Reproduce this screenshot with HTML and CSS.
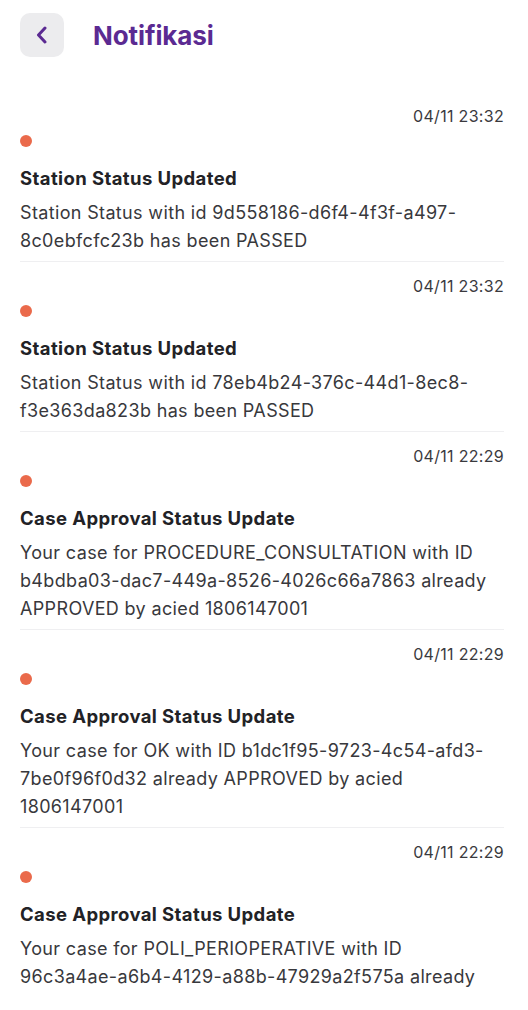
FILE: index.html
```html
<!DOCTYPE html>
<html lang="id">
<head>
<meta charset="utf-8">
<title>Notifikasi</title>
<link rel="stylesheet" href="styles.css">
</head>
<body>
<div class="page">
  <header class="header">
    <button class="back" aria-label="Kembali">
      <svg width="14" height="18" viewBox="0 0 14 18"><path d="M10 2 L3.5 9 L10 16" fill="none" stroke="#5b2a92" stroke-width="3" stroke-linecap="round" stroke-linejoin="round"/></svg>
    </button>
    <h1 class="title">Notifikasi</h1>
  </header>
  <ul class="list">
    <li class="item">
      <div class="time">04/11 23:32</div>
      <span class="dot"></span>
      <div class="item-title">Station Status Updated</div>
      <p class="body">Station Status with id 9d558186-d6f4-4f3f-a497-<br>8c0ebfcfc23b has been PASSED</p>
    </li>
    <li class="item">
      <div class="time">04/11 23:32</div>
      <span class="dot"></span>
      <div class="item-title">Station Status Updated</div>
      <p class="body">Station Status with id 78eb4b24-376c-44d1-8ec8-<br>f3e363da823b has been PASSED</p>
    </li>
    <li class="item">
      <div class="time">04/11 22:29</div>
      <span class="dot"></span>
      <div class="item-title">Case Approval Status Update</div>
      <p class="body">Your case for PROCEDURE_CONSULTATION with ID<br>b4bdba03-dac7-449a-8526-4026c66a7863 already<br>APPROVED by acied 1806147001</p>
    </li>
    <li class="item">
      <div class="time">04/11 22:29</div>
      <span class="dot"></span>
      <div class="item-title">Case Approval Status Update</div>
      <p class="body">Your case for OK with ID b1dc1f95-9723-4c54-afd3-<br>7be0f96f0d32 already APPROVED by acied<br>1806147001</p>
    </li>
    <li class="item">
      <div class="time">04/11 22:29</div>
      <span class="dot"></span>
      <div class="item-title">Case Approval Status Update</div>
      <p class="body">Your case for POLI_PERIOPERATIVE with ID<br>96c3a4ae-a6b4-4129-a88b-47929a2f575a already</p>
    </li>
  </ul>
</div>
</body>
</html>
```

FILE: styles.css
```css
* { box-sizing: border-box; }
html, body { margin: 0; padding: 0; background: #ffffff; }
body {
  font-family: Inter, "Noto Sans", "Liberation Sans", sans-serif;
  color: #2a2a2e;
  width: 528px;
  height: 1010px;
  overflow: hidden;
}
.page { padding: 13px 24px 0 20px; }
.header {
  display: flex;
  align-items: center;
  gap: 29px;
  height: 44px;
}
.back {
  width: 44px;
  height: 44px;
  border: none;
  border-radius: 10px;
  background: #ececee;
  display: flex;
  align-items: center;
  justify-content: center;
  padding: 0;
}
.title {
  margin: 0;
  font-size: 26px;
  font-weight: 700;
  color: #5b2a92;
  letter-spacing: -0.1px;
}
.list {
  list-style: none;
  margin: 35px 0 0 0;
  padding: 0;
}
.item {
  display: flex;
  flex-direction: column;
  align-items: flex-start;
  padding: 14px 0 6px 0;
  border-bottom: 1px solid #efeff1;
}
.item:last-child { border-bottom: none; }
.time {
  align-self: flex-end;
  font-size: 16px;
  line-height: 20px;
  letter-spacing: 0.3px;
  color: #3a3a3e;
}
.dot {
  width: 12px;
  height: 12px;
  border-radius: 50%;
  background: #ea6a4b;
  margin-top: 9px;
}
.item-title {
  margin-top: 19px;
  font-size: 18.5px;
  line-height: 24px;
  font-weight: 700;
  letter-spacing: 0.4px;
  color: #222226;
}
.body {
  margin: 9px 0 0 0;
  font-size: 18px;
  line-height: 28px;
  letter-spacing: 0.35px;
  color: #38383c;
}
```
